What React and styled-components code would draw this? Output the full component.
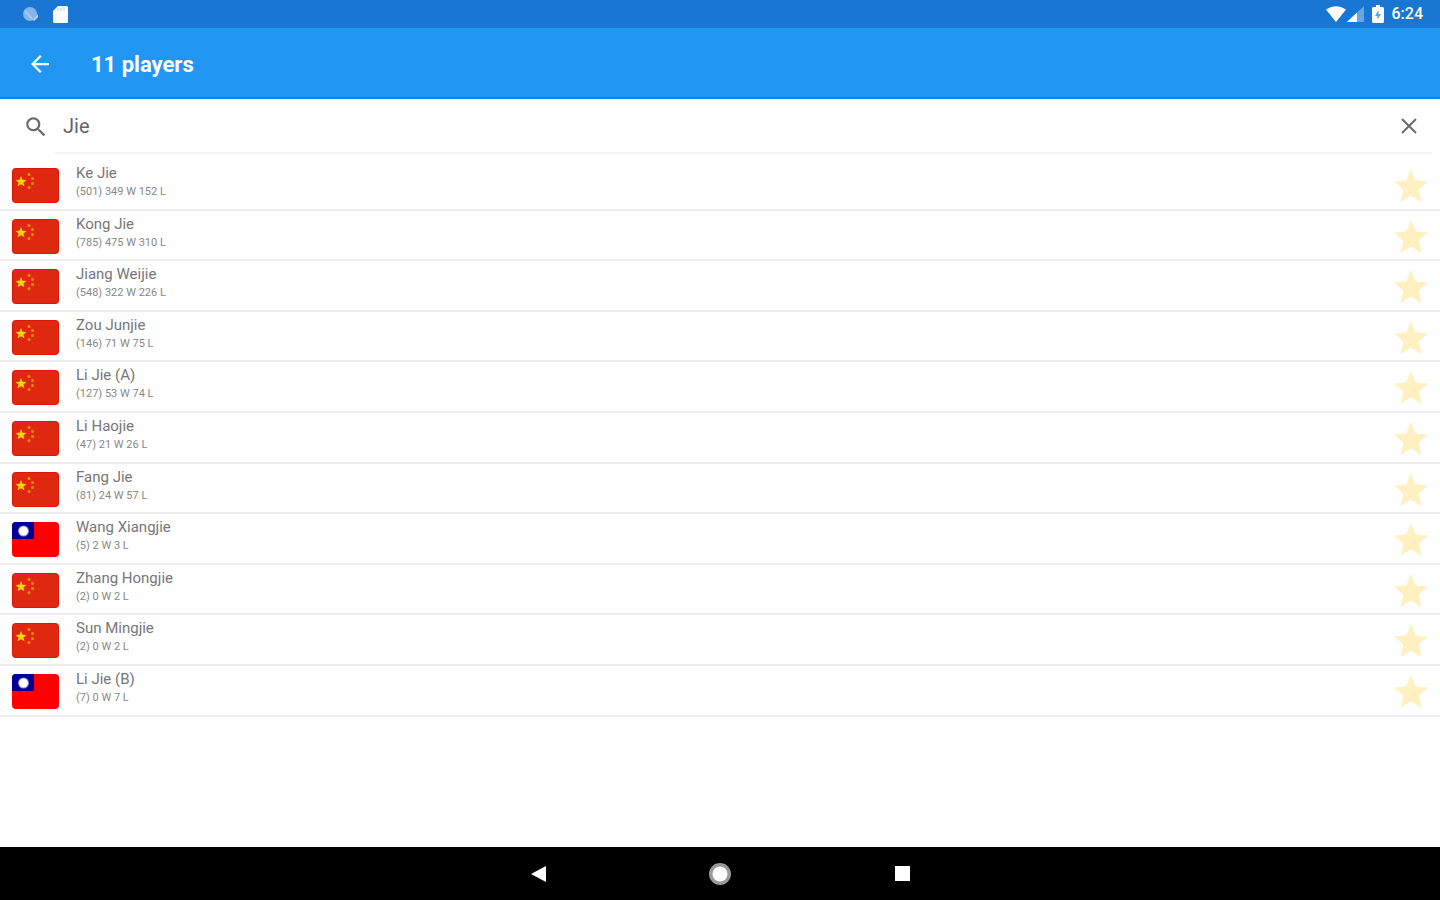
import { useState } from "react";
import styled, { createGlobalStyle } from "styled-components";

const GlobalStyle = createGlobalStyle`
  * {
    box-sizing: border-box;
  }
  body {
    margin: 0;
    background: #fefefe;
    font-family: Roboto, "Liberation Sans", sans-serif;
  }
  button {
    display: flex;
    align-items: center;
    justify-content: center;
    padding: 0;
    border: 0;
    background: none;
    cursor: pointer;
  }
  svg {
    display: block;
  }
`;

const Screen = styled.div`
  display: flex;
  flex-direction: column;
  min-height: 100vh;
`;

const StatusBar = styled.div`
  display: flex;
  align-items: center;
  justify-content: space-between;
  height: 28px;
  padding: 0 17px 0 22px;
  background: #1976d2;
  color: #fff;
`;

const StatusGroup = styled.div`
  display: flex;
  align-items: center;
  gap: ${(props) => props.$gap}px;
`;

const Clock = styled.time`
  font-size: 16px;
  font-weight: 500;
  line-height: 28px;
`;

const AppBar = styled.header`
  display: flex;
  align-items: center;
  gap: 34px;
  height: 71px;
  padding: 2px 23px 0;
  border-bottom: 2px solid #0a87ee;
  background: #2196f3;
  color: #fff;
`;

const BackButton = styled.button`
  width: 34px;
  height: 34px;
  color: inherit;
`;

const Title = styled.h1`
  margin: 0;
  padding-top: 2px;
  font-size: 22px;
  font-weight: 700;
  line-height: 32px;
`;

const SearchBar = styled.form`
  display: flex;
  align-items: center;
  height: 55px;
  padding: 0 8px 0 23px;
  color: #6b6b6b;
`;

const SearchLabel = styled.label`
  display: flex;
  align-items: center;
  width: 32px;
`;

const SearchField = styled.div`
  display: flex;
  flex: 1;
  align-self: stretch;
  align-items: center;
  padding-left: 8px;
  border-bottom: 2px solid #f5f5f5;
`;

const SearchInput = styled.input`
  flex: 1;
  min-width: 0;
  padding: 0;
  border: 0;
  outline: none;
  background: none;
  color: #666;
  font-family: inherit;
  font-size: 20px;
  line-height: 28px;
`;

const ClearButton = styled.button`
  width: 46px;
  height: 46px;
  color: inherit;
`;

const PlayerList = styled.ul`
  margin: 6px 0 0;
  padding: 0;
  list-style: none;
`;

const PlayerRow = styled.li`
  display: flex;
  align-items: center;
  gap: 17px;
  min-height: 51px;
  padding: 2px 12px 0;
  border-bottom: 2px solid #ededed;

  &:nth-child(5n + 2),
  &:nth-child(5n + 4) {
    min-height: 50px;
  }
`;

const PlayerInfo = styled.div`
  flex: 1;
  align-self: flex-start;
  padding-top: 1px;
`;

const PlayerName = styled.div`
  color: #777;
  font-size: 15px;
  line-height: 20px;
`;

const PlayerScore = styled.div`
  color: #888;
  font-size: 11px;
  line-height: 18px;
`;

const StarButton = styled.button`
  width: 34px;
  height: 36px;
`;

const NavBar = styled.nav`
  display: flex;
  align-items: center;
  justify-content: center;
  gap: 134px;
  height: 53px;
  margin-top: auto;
  background: #000;
`;

const NavButton = styled.button`
  width: 48px;
  height: 48px;
  color: #fff;
`;

const players = [
  { name: "Ke Jie", country: "cn", won: 349, lost: 152 },
  { name: "Kong Jie", country: "cn", won: 475, lost: 310 },
  { name: "Jiang Weijie", country: "cn", won: 322, lost: 226 },
  { name: "Zou Junjie", country: "cn", won: 71, lost: 75 },
  { name: "Li Jie (A)", country: "cn", won: 53, lost: 74 },
  { name: "Li Haojie", country: "cn", won: 21, lost: 26 },
  { name: "Fang Jie", country: "cn", won: 24, lost: 57 },
  { name: "Wang Xiangjie", country: "tw", won: 2, lost: 3 },
  { name: "Zhang Hongjie", country: "cn", won: 0, lost: 2 },
  { name: "Sun Mingjie", country: "cn", won: 0, lost: 2 },
  { name: "Li Jie (B)", country: "tw", won: 0, lost: 7 },
];

const ChinaFlag = () => (
  <svg width="47" height="35" viewBox="0 0 47 35" role="img" aria-label="China">
    <rect width="47" height="35" rx="4" fill="#dc1508" />
    <rect x="1" y="1" width="45" height="33" rx="3" fill="#de2910" />
    <path
      fill="#ffd500"
      d="M9 8l1.500 3.700 4 .2-3.100 2.500 1.100 3.900L9 16.200l-3.500 2.100 1.100-3.900-3.100-2.500 4-.2z"
    />
    <g fill="#f08a08">
      <circle cx="17" cy="6.500" r="1.500" />
      <circle cx="20.500" cy="10.500" r="1.500" />
      <circle cx="20.500" cy="15.500" r="1.500" />
      <circle cx="17" cy="19.500" r="1.500" />
    </g>
  </svg>
);

const TaiwanFlag = () => (
  <svg width="47" height="35" viewBox="0 0 47 35" role="img" aria-label="Taiwan">
    <rect width="47" height="35" rx="4" fill="#fe0000" />
    <path fill="#000095" d="M4 0h18v17H0V4a4 4 0 0 1 4-4z" />
    <circle cx="11.500" cy="9" r="5.500" fill="#8f8fd0" />
    <circle cx="11.500" cy="9" r="4.500" fill="#fff" />
  </svg>
);

const flags = { cn: ChinaFlag, tw: TaiwanFlag };

const Player = ({ name, country, won, lost }) => {
  const [starred, setStarred] = useState(false);
  const Flag = flags[country];

  return (
    <PlayerRow>
      <Flag />
      <PlayerInfo>
        <PlayerName>{name}</PlayerName>
        <PlayerScore>
          ({won + lost}) {won} W {lost} L
        </PlayerScore>
      </PlayerInfo>
      <StarButton
        type="button"
        aria-label={`Favorite ${name}`}
        aria-pressed={starred}
        onClick={() => setStarred(!starred)}
      >
        <svg width="34" height="33" viewBox="0 0 34 33">
          <path
            fill={starred ? "#ffc107" : "#fff0c2"}
            d="M17 0l4.800 11.500L34 12.500l-9.300 8L27.500 33 17 26.400 6.500 33l2.800-12.500L0 12.500l12.200-1z"
          />
        </svg>
      </StarButton>
    </PlayerRow>
  );
};

export default function App() {
  const [query, setQuery] = useState("Jie");
  const found = players.filter((p) =>
    p.name.toLowerCase().includes(query.toLowerCase())
  );

  return (
    <Screen>
      <GlobalStyle />
      <StatusBar>
        <StatusGroup $gap={14}>
          <svg width="17" height="17" viewBox="0 0 17 17">
            <circle cx="8" cy="8" r="7" fill="#86b5e8" />
            <path d="M3 5l7 8" stroke="#a3c8ef" strokeWidth="2" />
            <path d="M11 14l5-6v3l-4 4z" fill="#c5dcf5" />
          </svg>
          <svg width="15" height="17" viewBox="0 0 15 17" fill="#fff">
            <path d="M5 0h8.500A1.500 1.500 0 0 1 15 1.500v14a1.500 1.500 0 0 1-1.500 1.500h-12A1.500 1.500 0 0 1 0 15.500V5z" />
            <path d="M5 2v3M8 2v3M11 2v3" stroke="#a9ccf1" strokeWidth="1" />
          </svg>
        </StatusGroup>
        <StatusGroup $gap={8}>
          <StatusGroup $gap={1}>
            <svg width="20" height="16" viewBox="0 0 20 16" fill="#fff">
              <path d="M0 3.500Q10-3 20 3.500L10 16z" />
            </svg>
            <svg width="17" height="16" viewBox="0 0 17 16" fill="#fff">
              <path d="M17 0v16H0z" opacity=".35" />
              <path d="M10 6.600V16H0z" />
            </svg>
          </StatusGroup>
          <svg width="12" height="18" viewBox="0 0 12 18">
            <path
              fill="#fff"
              d="M4 0h4v2h2.500A1.500 1.500 0 0 1 12 3.500v13a1.500 1.500 0 0 1-1.500 1.500h-9A1.500 1.500 0 0 1 0 16.500v-13A1.500 1.500 0 0 1 1.500 2H4z"
            />
            <path fill="#5c9fe2" d="M6.500 5v4H9l-3.500 5.500V11H3z" />
          </svg>
          <Clock>6:24</Clock>
        </StatusGroup>
      </StatusBar>

      <AppBar>
        <BackButton type="button" aria-label="Back">
          <svg width="18" height="18" viewBox="0 0 16 16" fill="currentColor">
            <path d="M16 7H3.800l5.600-5.600L8 0 0 8l8 8 1.400-1.400L3.800 9H16z" />
          </svg>
        </BackButton>
        <Title>{found.length} players</Title>
      </AppBar>

      <SearchBar role="search" onSubmit={(e) => e.preventDefault()}>
        <SearchLabel htmlFor="player-search" aria-label="Search players">
          <svg width="26" height="26" viewBox="0 0 24 24" fill="currentColor">
            <path d="M15.500 14h-.79l-.28-.27A6.470 6.470 0 0 0 16 9.500 6.500 6.500 0 1 0 9.500 16c1.610 0 3.090-.59 4.230-1.570l.27.28v.79l5 4.990L20.490 19zm-6 0C7.010 14 5 11.990 5 9.500S7.010 5 9.500 5 14 7.010 14 9.500 11.990 14 9.500 14z" />
          </svg>
        </SearchLabel>
        <SearchField>
          <SearchInput
            id="player-search"
            type="text"
            value={query}
            onChange={(e) => setQuery(e.target.value)}
          />
          <ClearButton
            type="button"
            aria-label="Clear"
            onClick={() => setQuery("")}
          >
            <svg width="16" height="16" viewBox="0 0 16 16">
              <path
                d="M1 1l14 14M15 1L1 15"
                stroke="currentColor"
                strokeWidth="2"
              />
            </svg>
          </ClearButton>
        </SearchField>
      </SearchBar>

      <PlayerList>
        {found.map((player) => (
          <Player key={player.name} {...player} />
        ))}
      </PlayerList>

      <NavBar>
        <NavButton type="button" aria-label="Back">
          <svg width="15" height="16" viewBox="0 0 15 16" fill="currentColor">
            <path d="M15 0v16L0 8z" />
          </svg>
        </NavButton>
        <NavButton type="button" aria-label="Home">
          <svg width="24" height="24" viewBox="0 0 24 24">
            <circle cx="12" cy="12" r="11" fill="#999" />
            <circle cx="12" cy="12" r="7.500" fill="#fff" />
          </svg>
        </NavButton>
        <NavButton type="button" aria-label="Overview">
          <svg width="15" height="15" viewBox="0 0 15 15" fill="currentColor">
            <rect width="15" height="15" />
          </svg>
        </NavButton>
      </NavBar>
    </Screen>
  );
}
